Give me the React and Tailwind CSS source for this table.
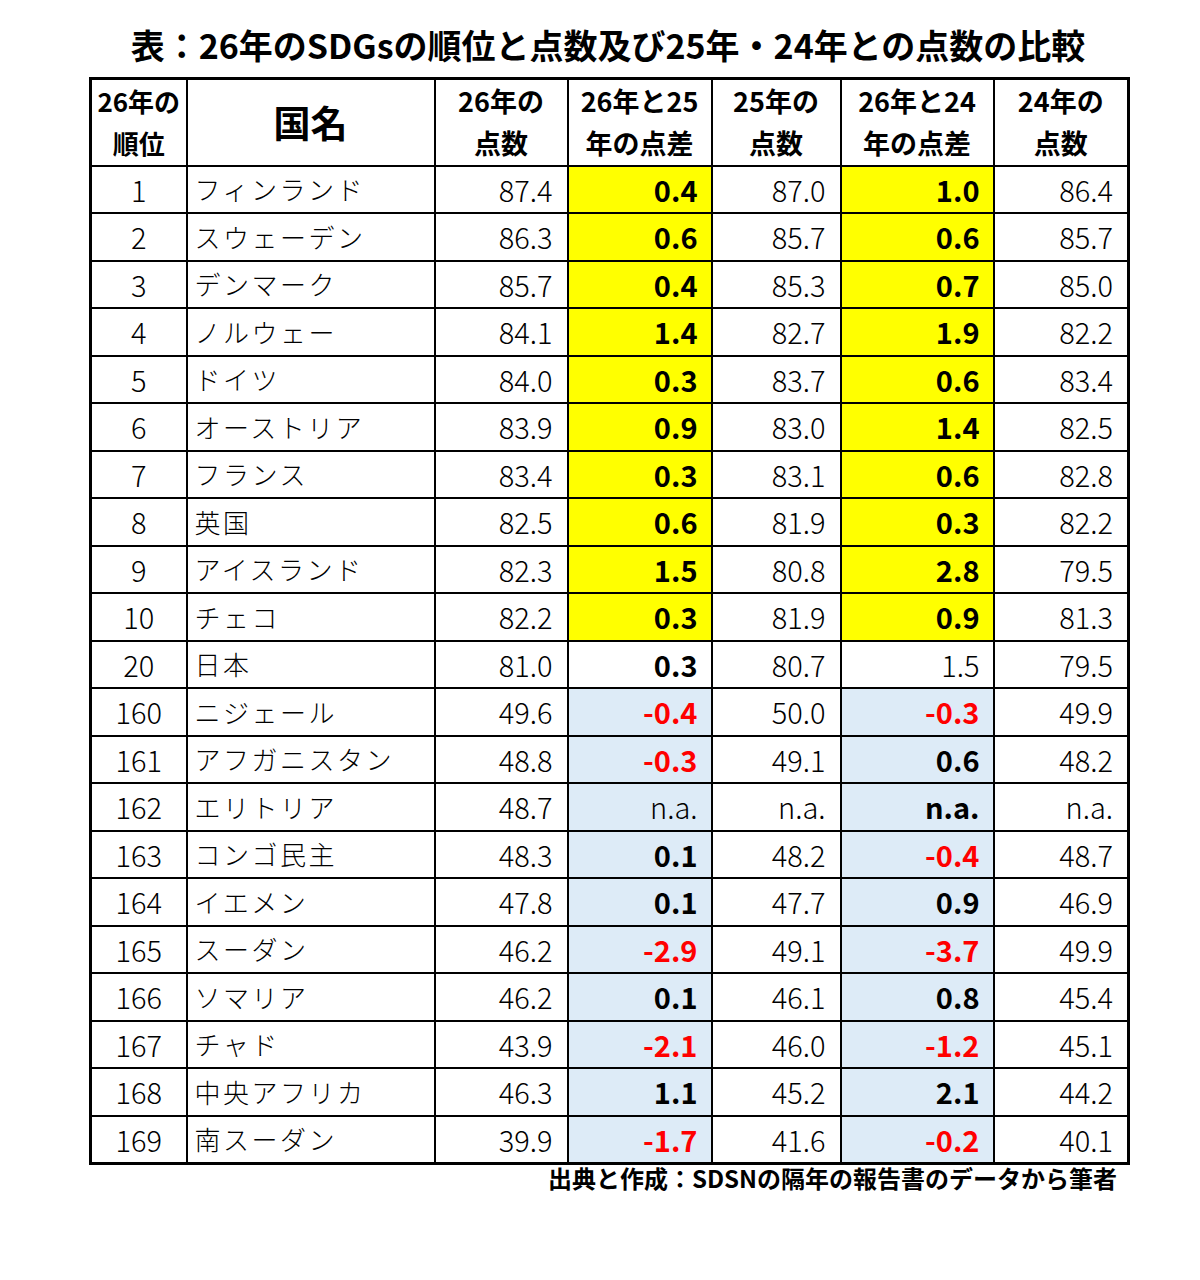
import React from "react";

const rows = [
  ["1", "フィンランド", "87.4", "0.4", "87.0", "1.0", "86.4"],
  ["2", "スウェーデン", "86.3", "0.6", "85.7", "0.6", "85.7"],
  ["3", "デンマーク", "85.7", "0.4", "85.3", "0.7", "85.0"],
  ["4", "ノルウェー", "84.1", "1.4", "82.7", "1.9", "82.2"],
  ["5", "ドイツ", "84.0", "0.3", "83.7", "0.6", "83.4"],
  ["6", "オーストリア", "83.9", "0.9", "83.0", "1.4", "82.5"],
  ["7", "フランス", "83.4", "0.3", "83.1", "0.6", "82.8"],
  ["8", "英国", "82.5", "0.6", "81.9", "0.3", "82.2"],
  ["9", "アイスランド", "82.3", "1.5", "80.8", "2.8", "79.5"],
  ["10", "チェコ", "82.2", "0.3", "81.9", "0.9", "81.3"],
  ["20", "日本", "81.0", "0.3", "80.7", "1.5", "79.5"],
  ["160", "ニジェール", "49.6", "-0.4", "50.0", "-0.3", "49.9"],
  ["161", "アフガニスタン", "48.8", "-0.3", "49.1", "0.6", "48.2"],
  ["162", "エリトリア", "48.7", "n.a.", "n.a.", "n.a.", "n.a."],
  ["163", "コンゴ民主", "48.3", "0.1", "48.2", "-0.4", "48.7"],
  ["164", "イエメン", "47.8", "0.1", "47.7", "0.9", "46.9"],
  ["165", "スーダン", "46.2", "-2.9", "49.1", "-3.7", "49.9"],
  ["166", "ソマリア", "46.2", "0.1", "46.1", "0.8", "45.4"],
  ["167", "チャド", "43.9", "-2.1", "46.0", "-1.2", "45.1"],
  ["168", "中央アフリカ", "46.3", "1.1", "45.2", "2.1", "44.2"],
  ["169", "南スーダン", "39.9", "-1.7", "41.6", "-0.2", "40.1"],
];

const font = { fontFamily: '"Noto Sans CJK JP", "Noto Sans", sans-serif' };

function DiffCell({ value, bg, bold }) {
  const neg = value.startsWith("-");
  return (
    <td
      className={`border-2 border-black p-0 text-right pr-[13px] text-[29px] leading-none ${bg} ${
        bold ? "font-bold" : "font-light"
      } ${neg ? "text-[#ff0000]" : "text-black"}`}
    >
      {value}
    </td>
  );
}

export default function App() {
  return (
    <div className="w-[1200px] h-[1280px] bg-white text-black" style={font}>
      <div className="ml-[89px] w-[1038px]">
        <div className="h-[77px] pt-[22px] text-center text-[34px] font-bold leading-[46px] whitespace-nowrap">
          表：26年のSDGsの順位と点数及び25年・24年との点数の比較
        </div>
        <table className="table-fixed border-collapse border-[3px] border-black w-[1038px]">
          <colgroup>
            <col className="w-[96px]" />
            <col className="w-[248px]" />
            <col className="w-[133px]" />
            <col className="w-[144px]" />
            <col className="w-[129px]" />
            <col className="w-[153px]" />
            <col className="w-[135px]" />
          </colgroup>
          <thead>
            <tr className="h-[87px]">
              <th className="border-2 border-black p-0 text-[26px] font-bold leading-[42px] text-center">
                26年の<br />順位
              </th>
              <th className="border-2 border-black p-0 text-[37px] font-bold leading-none text-center">
                国名
              </th>
              <th className="border-2 border-black p-0 text-[27px] font-bold leading-[42px] text-center">
                26年の<br />点数
              </th>
              <th className="border-2 border-black p-0 text-[27px] font-bold leading-[42px] text-center whitespace-nowrap">
                26年と25<br />年の点差
              </th>
              <th className="border-2 border-black p-0 text-[27px] font-bold leading-[42px] text-center">
                25年の<br />点数
              </th>
              <th className="border-2 border-black p-0 text-[27px] font-bold leading-[42px] text-center whitespace-nowrap">
                26年と24<br />年の点差
              </th>
              <th className="border-2 border-black p-0 text-[27px] font-bold leading-[42px] text-center">
                24年の<br />点数
              </th>
            </tr>
          </thead>
          <tbody>
            {rows.map((r, i) => {
              const bg = i < 10 ? "bg-[#ffff00]" : i === 10 ? "bg-white" : "bg-[#ddebf7]";
              const bold1 = !(i === 13);
              const bold2 = !(i === 10);
              return (
                <tr key={r[0]} className="h-[47.5px]">
                  <td className="border-2 border-black p-0 text-center text-[29px] font-light leading-none">
                    {r[0]}
                  </td>
                  <td className="border-2 border-black p-0 text-left pl-[7px] text-[26px] font-light tracking-[2.5px] leading-none whitespace-nowrap">
                    {r[1]}
                  </td>
                  <td className="border-2 border-black p-0 text-right pr-[14px] text-[29px] font-light leading-none">
                    {r[2]}
                  </td>
                  <DiffCell value={r[3]} bg={bg} bold={bold1} />
                  <td className="border-2 border-black p-0 text-right pr-[14px] text-[29px] font-light leading-none">
                    {r[4]}
                  </td>
                  <DiffCell value={r[5]} bg={bg} bold={bold2} />
                  <td className="border-2 border-black p-0 text-right pr-[14px] text-[29px] font-light leading-none">
                    {r[6]}
                  </td>
                </tr>
              );
            })}
          </tbody>
        </table>
        <div className="text-right pr-[10px] text-[24px] font-bold leading-[22px] pt-[2px] whitespace-nowrap">
          出典と作成：SDSNの隔年の報告書のデータから筆者
        </div>
      </div>
    </div>
  );
}
